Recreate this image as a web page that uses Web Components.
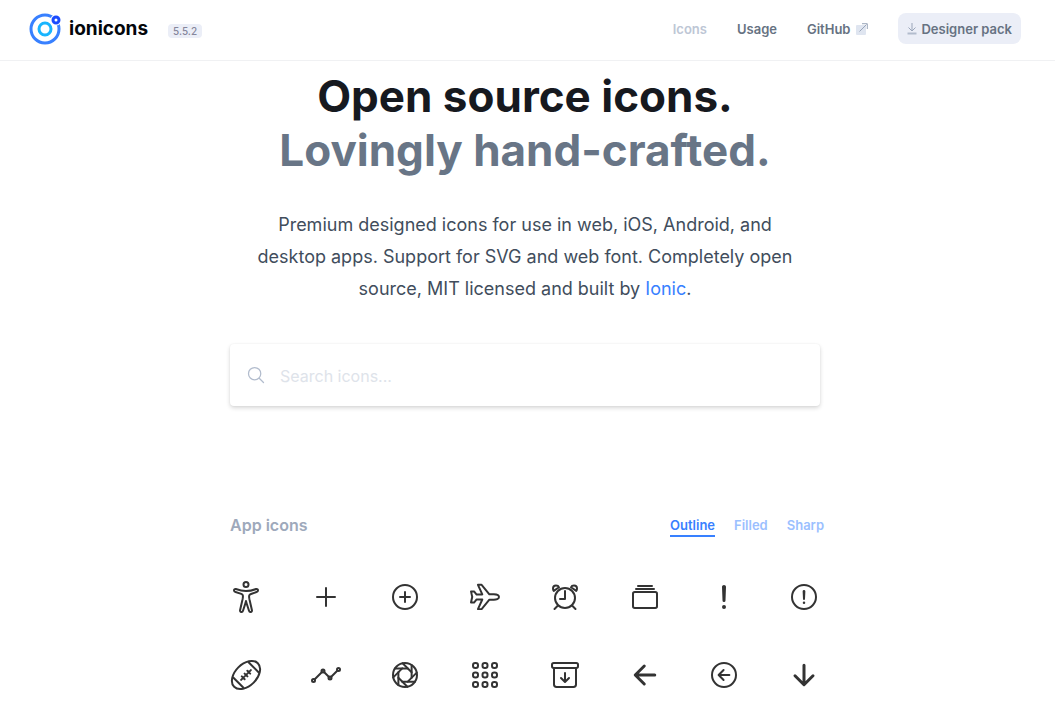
<!DOCTYPE html>
<html lang="en">
<head>
<meta charset="utf-8">
<title>Ionicons</title>
<meta name="viewport" content="width=device-width, initial-scale=1">
<style>
  body { margin: 0; background: #fff; font-family: Inter, "Liberation Sans", sans-serif; }
</style>
</head>
<body>
<ion-page>
  <site-header slot="header" version="5.5.2"></site-header>
  <page-hero>
    <span slot="title">Open source icons.</span>
    <span slot="subtitle">Lovingly hand-crafted.</span>
  </page-hero>
  <icon-search></icon-search>
  <icon-section>App icons</icon-section>
</ion-page>

<script>
const define = (name, html, setup) => {
  const template = document.createElement('template');
  template.innerHTML = html;
  customElements.define(name, class extends HTMLElement {
    constructor() {
      super();
      this.attachShadow({ mode: 'open' }).append(template.content.cloneNode(true));
    }
    connectedCallback() {
      if (setup && !this.ready) { this.ready = true; setup(this, this.shadowRoot); }
    }
  });
};

const ring = '<circle cx="256" cy="256" r="192"/>';
const blades = [0, 45, 90, 135, 180, 225, 270, 315]
  .map(a => `<path d="M300 150H96" transform="rotate(${a} 256 256)"/>`).join('');
const dots = [64, 216, 368]
  .map(y => [64, 216, 368].map(x => `<rect x="${x}" y="${y}" width="80" height="80" rx="36"/>`).join('')).join('');

const icons = {
  'accessibility': '<circle cx="256" cy="56" r="40"/><path d="M204.23 274.44c2.9-18.06 4.2-35.52-.5-47.59-4-10.38-12.7-16.19-23.2-20.15L88 176.76c-12-4-23.21-10.7-24-23.94-1-17 14-28 29-24 0 0 88 31.14 163 31.14s162-31 162-31c18-5 30 9 30 23.79 0 14.21-11 19.21-24 23.94l-88 31.91c-8 3-21 9-26 18.18-6 10.75-5 29.53-2.1 47.59l5.9 29.63 37.41 163.9c2.8 13.15-6.3 25.44-19.4 27.74S308 489 304.12 476.28l-37.56-115.93q-2.71-8.34-4.8-16.87L256 320l-5.3 21.65q-2.52 10.35-5.8 20.48L208 476.18c-4 12.85-14.5 21.75-27.6 19.46s-22.4-15.59-19.46-27.74l37.39-163.83z"/>',
  'add': '<path d="M256 112v288M400 256H112"/>',
  'add-circle': ring + '<path d="M256 176v160M336 256H176"/>',
  'airplane': '<g transform="translate(17 17) scale(.933)" stroke-width="34"><path d="M407.72 208c-2.72 0-14.44.08-18.67.31l-57.77 1.52L198.06 48h-62.81l74.59 164.61-97.31 1.44L68.25 160H16.14l20.61 94.18c.5 1.5.5 2-.01 3.32L15.86 352h51.78l45.45-55 96.77 2.17L135.24 464h63l133-161.75 57.77 1.54c4.29.23 16 .31 18.66.31 24.35 0 44.27-3.34 59.21-9.94C492.22 283 496 265.46 496 256c0-30.06-33-48-88.28-48z"/></g>',
  'alarm': '<circle cx="256" cy="272" r="160"/><path d="M256 160v128h-80M144 392l-56 56M368 392l56 56"/><path d="M160 100C152 80 134 72 112 72c-28 0-48 20-48 48 0 16 4 28 12 38zM352 100c8-20 26-28 48-28 28 0 48 20 48 48 0 16-4 28-12 38z"/>',
  'albums': '<rect x="64" y="176" width="384" height="256" rx="28"/><path d="M144 80h224M112 128h288"/>',
  'alert': '<path d="M256 80c-8.66 0-16.58 7.36-16 16l8 216a8 8 0 0016 0l8-216c.58-8.64-7.34-16-16-16z"/><circle cx="256" cy="416" r="16"/>',
  'alert-circle': ring + '<path d="M250.26 166.05L256 288l5.73-121.95a5.74 5.74 0 00-11.47 0z"/><circle cx="256" cy="348" r="20" fill="currentColor" stroke="none"/>',
  'american-football': '<ellipse cx="256" cy="256" rx="267.57" ry="173.44" transform="rotate(-45 256 256)"/><path d="M334.04 177.96L177.96 334.04M278.3 278.3l-44.6-44.6M322.89 233.7l-44.59-44.59M456.68 211.4L300.6 55.32M211.4 456.68L55.32 300.6M233.7 322.89l-44.59-44.59"/>',
  'analytics': '<path d="M344 280l88-88M232 216l64 64M80 320l104-104"/><circle cx="456" cy="168" r="24"/><circle cx="320" cy="304" r="24" fill="#777"/><circle cx="208" cy="192" r="24" fill="#777"/><circle cx="56" cy="344" r="24"/>',
  'aperture': ring + blades,
  'apps': dots,
  'archive': '<path d="M80 152v256a40.12 40.12 0 0040 40h272a40.12 40.12 0 0040-40V152"/><rect x="48" y="64" width="416" height="80" rx="28"/><path d="M320 304l-64 64-64-64M256 345.89V224"/>',
  'arrow-back': '<path stroke-width="48" d="M244 400L100 256l144-144M120 256h292"/>',
  'arrow-back-circle': ring + '<path d="M249.38 336L170 256l79.38-80M181.03 256H342"/>',
  'arrow-down': '<path stroke-width="48" d="M112 268l144 144 144-144M256 392V100"/>',
  'search': '<path d="M221.09 64a157.09 157.09 0 10157.09 157.09A157.1 157.1 0 00221.09 64zM338.29 338.29L448 448"/>'
};

define('ion-icon', `
  <style>
    :host { display: block; width: 32px; height: 32px; }
    svg { display: block; width: 100%; height: 100%; overflow: visible; fill: none;
      stroke: currentColor; stroke-width: 32; stroke-linecap: round; stroke-linejoin: round; }
  </style>
  <svg viewBox="0 0 512 512" aria-hidden="true"></svg>`,
  (el, root) => { root.querySelector('svg').innerHTML = icons[el.getAttribute('name')] || ''; });

define('ion-page', `
  <style>
    :host { display: block; padding-right: 5px; }
    main { max-width: 590px; margin: 0 auto; padding: 8px 16px 12px; }
    .bar { margin-right: -5px; }
  </style>
  <div class="bar"><slot name="header"></slot></div>
  <main><slot></slot></main>`);

define('site-logo', `
  <style>
    :host { display: block; }
    a { display: flex; align-items: center; gap: 8px; color: #03060b; text-decoration: none;
      font-size: 19px; line-height: 32px; font-weight: 700; }
    svg { display: block; }
  </style>
  <a href="#">
    <svg width="32" height="32" viewBox="0 0 32 32" fill="none" aria-hidden="true">
      <circle cx="16" cy="16" r="14" stroke="#3880ff" stroke-width="3"/>
      <circle cx="27" cy="7" r="5.500" fill="#fff"/>
      <circle cx="16" cy="16" r="6" stroke="#19b5fe" stroke-width="3"/>
      <circle cx="27" cy="7" r="3" stroke="#1a4bff" stroke-width="3"/>
    </svg>
    <span>ionicons</span>
  </a>`);

define('site-header', `
  <style>
    :host { display: block; border-bottom: 1px solid #f0f1f3; }
    header { display: flex; align-items: flex-start; justify-content: space-between; flex-wrap: wrap;
      padding: 13px 34px 15px 29px; }
    .brand, nav { display: flex; align-items: center; }
    .brand { gap: 20px; }
    .version { background: #ebeef7; color: #86869b; border-radius: 4px; padding: 0 5px; margin-top: 4px;
      font-size: 10px; line-height: 14px; font-weight: 500; }
    nav { gap: 30px; }
    a, button { font: 600 13px/18px Inter, "Liberation Sans", sans-serif; color: #667282; text-decoration: none; }
    a { display: flex; align-items: center; gap: 6px; }
    a[aria-current] { color: #bdc6d5; }
    button { display: flex; align-items: center; gap: 4px; border: 0; border-radius: 8px;
      background: #ebeef7; padding: 0 9px; height: 31px; cursor: pointer; }
    svg { display: block; }
  </style>
  <header>
    <div class="brand"><site-logo></site-logo><span class="version"></span></div>
    <nav aria-label="Main">
      <a href="#icons" aria-current="page">Icons</a>
      <a href="#usage">Usage</a>
      <a href="#github">GitHub
        <svg width="12" height="12" viewBox="0 0 12 12" fill="none" aria-hidden="true">
          <rect y="2" width="10" height="10" rx="1" fill="#dfe5f0"/>
          <path d="M3.5 8.5l7-7M6 .7h5.3V6" stroke="#99a5b9"/>
        </svg>
      </a>
      <button type="button">
        <svg width="10" height="12" viewBox="0 0 10 12" fill="none" aria-hidden="true">
          <path d="M5 0v7.5M1.5 4.5L5 8l3.500-3.500" stroke="#99a5b9"/>
          <path d="M.5 10.500h9" stroke="#b2bccd" stroke-width="2"/>
        </svg>
        Designer pack
      </button>
    </nav>
  </header>`,
  (el, root) => { root.querySelector('.version').textContent = el.getAttribute('version'); });

define('page-hero', `
  <style>
    :host { display: block; text-align: center; }
    h1 { margin: 0; font-size: 44px; line-height: 54px; font-weight: 700; color: #16191f; }
    h1 span { display: block; }
    .sub { color: #687586; }
    p { max-width: 560px; margin: 32px auto 0; font-size: 18px; line-height: 32px; color: #414d5c; }
    a { color: #3880ff; text-decoration: none; }
  </style>
  <h1><span><slot name="title"></slot></span><span class="sub"><slot name="subtitle"></slot></span></h1>
  <p>Premium designed icons for use in web, iOS, Android, and desktop apps. Support for SVG and web font. Completely open source, MIT licensed and built by <a href="#ionic">Ionic</a>.</p>`);

define('icon-search', `
  <style>
    :host { display: block; margin-top: 39px; }
    label { display: flex; align-items: center; gap: 14px; padding: 0 16px; border-radius: 4px;
      background: #fff; box-shadow: 0 2px 4px rgba(0,0,0,.16), 0 0 2px rgba(0,0,0,.06); }
    ion-icon { width: 20px; height: 20px; color: #b2bccd; }
    input { flex: 1; min-width: 0; border: 0; outline: 0; padding: 20px 0 18px; background: none;
      font: 400 16px/24px Inter, "Liberation Sans", sans-serif; height: 62px; box-sizing: border-box; color: #414d5c; }
    input::placeholder { color: #dee3ea; opacity: 1; }
  </style>
  <label><ion-icon name="search"></ion-icon><input type="search" placeholder="Search icons..." aria-label="Search icons"></label>`);

define('icon-section', `
  <style>
    :host { display: block; margin-top: 107px; }
    .head { display: flex; align-items: center; justify-content: space-between; margin-right: -4px; }
    h2 { margin: 0; font-size: 16px; line-height: 24px; font-weight: 600; color: #9ea9bb; }
    .tabs { display: flex; gap: 19px; }
    button { border: 0; border-bottom: 2px solid transparent; background: none; padding: 3px 0 1px;
      font: 600 13px/18px Inter, "Liberation Sans", sans-serif; color: #9bc0ff; cursor: pointer; }
    button[aria-selected="true"] { color: #3880ff; border-color: #3880ff; }
    .grid { display: grid; grid-template-columns: repeat(8, 32px); justify-content: space-between;
      row-gap: 46px; margin-top: 44px; color: #333; }
  </style>
  <div class="head">
    <h2><slot></slot></h2>
    <div class="tabs" role="tablist">
      <button type="button" role="tab" aria-selected="true">Outline</button>
      <button type="button" role="tab" aria-selected="false">Filled</button>
      <button type="button" role="tab" aria-selected="false">Sharp</button>
    </div>
  </div>
  <div class="grid"></div>`,
  (el, root) => {
    root.querySelector('.grid').innerHTML = Object.keys(icons).filter(n => n !== 'search')
      .map(n => `<ion-icon name="${n}"></ion-icon>`).join('');
    const tabs = root.querySelectorAll('button');
    tabs.forEach(tab => tab.addEventListener('click', () =>
      tabs.forEach(t => t.setAttribute('aria-selected', String(t === tab)))));
  });
</script>
</body>
</html>
